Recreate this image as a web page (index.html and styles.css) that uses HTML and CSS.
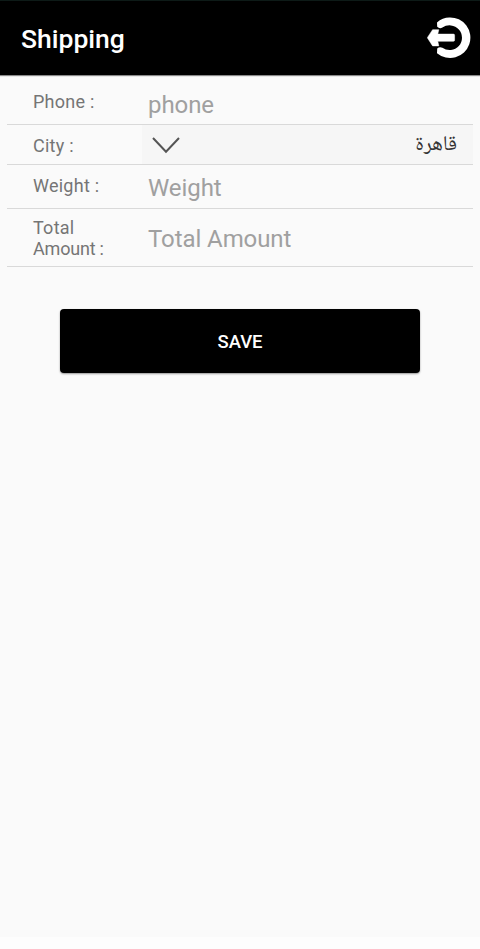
FILE: index.html
```html
<!DOCTYPE html>
<html lang="en">
<head>
<meta charset="utf-8">
<title>Shipping</title>
<link rel="stylesheet" href="styles.css">
</head>
<body>
<header class="appbar">
  <h1 class="title">Shipping</h1>
  <svg class="logout" width="44" height="44" viewBox="0 0 44 44">
    <path d="M10 5.4C13.5 2.1 18 .4 22.3 .4A20.3 20.3 0 1 1 10 36.2L10.2 31.6Q12.5 29.4 15.4 30.8A12.4 12.4 0 1 0 15.4 10.6Q12.5 12 10.2 9.8Z" fill="#fff"/>
    <path d="M.3 20.7L5.6 12.7H11.8L10.8 17.1H26.4Q27.6 17.1 27.6 18.3V23.1Q27.6 24.3 26.4 24.3H10.8L11.8 28.9H5.6Z" fill="#fff" stroke="#fff" stroke-width=".5" stroke-linejoin="round"/>
  </svg>
</header>
<main class="form">
  <div class="row row-phone"><span class="label">Phone :</span><span class="hint">phone</span></div>
  <div class="row row-city">
    <span class="label">City :</span>
    <div class="spinner">
      <svg class="chevron" width="28" height="17" viewBox="0 0 28 17"><path d="M1 1L14 14.8L27 1" fill="none" stroke="#555" stroke-width="2"/></svg>
      <span class="city" lang="ar" dir="rtl">قاهرة</span>
    </div>
  </div>
  <div class="row row-weight"><span class="label">Weight :</span><span class="hint">Weight</span></div>
  <div class="row row-total"><span class="label">Total<br><span class="tight">Amount :</span></span><span class="hint">Total Amount</span></div>
  <button class="save" type="button">SAVE</button>
</main>
<footer class="navbar"></footer>
</body>
</html>
```
FILE: styles.css
```css
* { box-sizing: border-box; }
body {
  margin: 0;
  height: 949px;
  display: flex;
  flex-direction: column;
  background: #fafafa;
  font-family: Roboto, "Liberation Sans", sans-serif;
}
.appbar {
  height: 75px;
  flex: none;
  display: flex;
  align-items: center;
  justify-content: space-between;
  padding: 2px 9px 0 21px;
  background: #000;
  border-top: 1px solid #0d1a17;
  box-shadow: 0 1px 1px rgba(0, 0, 0, .45);
}
.title {
  margin: 0;
  color: #fff;
  font-size: 26.5px;
  line-height: 30px;
  font-weight: 500;
}
.logout { display: block; }
.form {
  flex: 1;
  display: flex;
  flex-direction: column;
  padding: 0 7px;
}
.row {
  display: grid;
  grid-template-columns: 135px 1fr;
  align-items: start;
  border-bottom: 1px solid #d9d9d9;
}
.label {
  padding-left: 26px;
  color: #757575;
  font-size: 18px;
  line-height: 20.5px;
  letter-spacing: .25px;
}
.tight { letter-spacing: -.2px; }
.hint {
  padding-left: 6px;
  color: #a0a0a0;
  font-size: 24px;
  line-height: 28px;
  letter-spacing: -.08px;
}
.row-phone { height: 50px; }
.row-phone .label { padding-top: 17px; }
.row-phone .hint { padding-top: 16px; }
.row-city { height: 40px; }
.row-city .label { padding-top: 11px; }
.row-weight { height: 44px; }
.row-weight .label { padding-top: 11px; }
.row-weight .hint { padding-top: 9px; }
.row-total { height: 58px; }
.row-total .label { padding-top: 9px; }
.row-total .hint { padding-top: 16px; }
.spinner {
  height: 39px;
  display: flex;
  align-items: center;
  justify-content: space-between;
  padding: 0 16px 0 10px;
  background: #f6f6f6;
}
.chevron { margin-top: 2px; }
.city {
  color: #333;
  font-family: "Noto Naskh Arabic UI", "Noto Naskh Arabic", "Noto Sans Arabic", "DejaVu Sans", sans-serif;
  font-size: 21px;
  line-height: 30px;
}
.save {
  width: 360px;
  height: 64px;
  margin: 42px auto 0;
  padding: 1px 0 0;
  border: 0;
  border-radius: 4px;
  background: #000;
  color: #fff;
  font-family: inherit;
  font-size: 18.5px;
  font-weight: 500;
  box-shadow: 0 1px 2px rgba(0, 0, 0, .4);
}
.navbar {
  height: 12px;
  flex: none;
  background: #fdfdfd;
}
```
